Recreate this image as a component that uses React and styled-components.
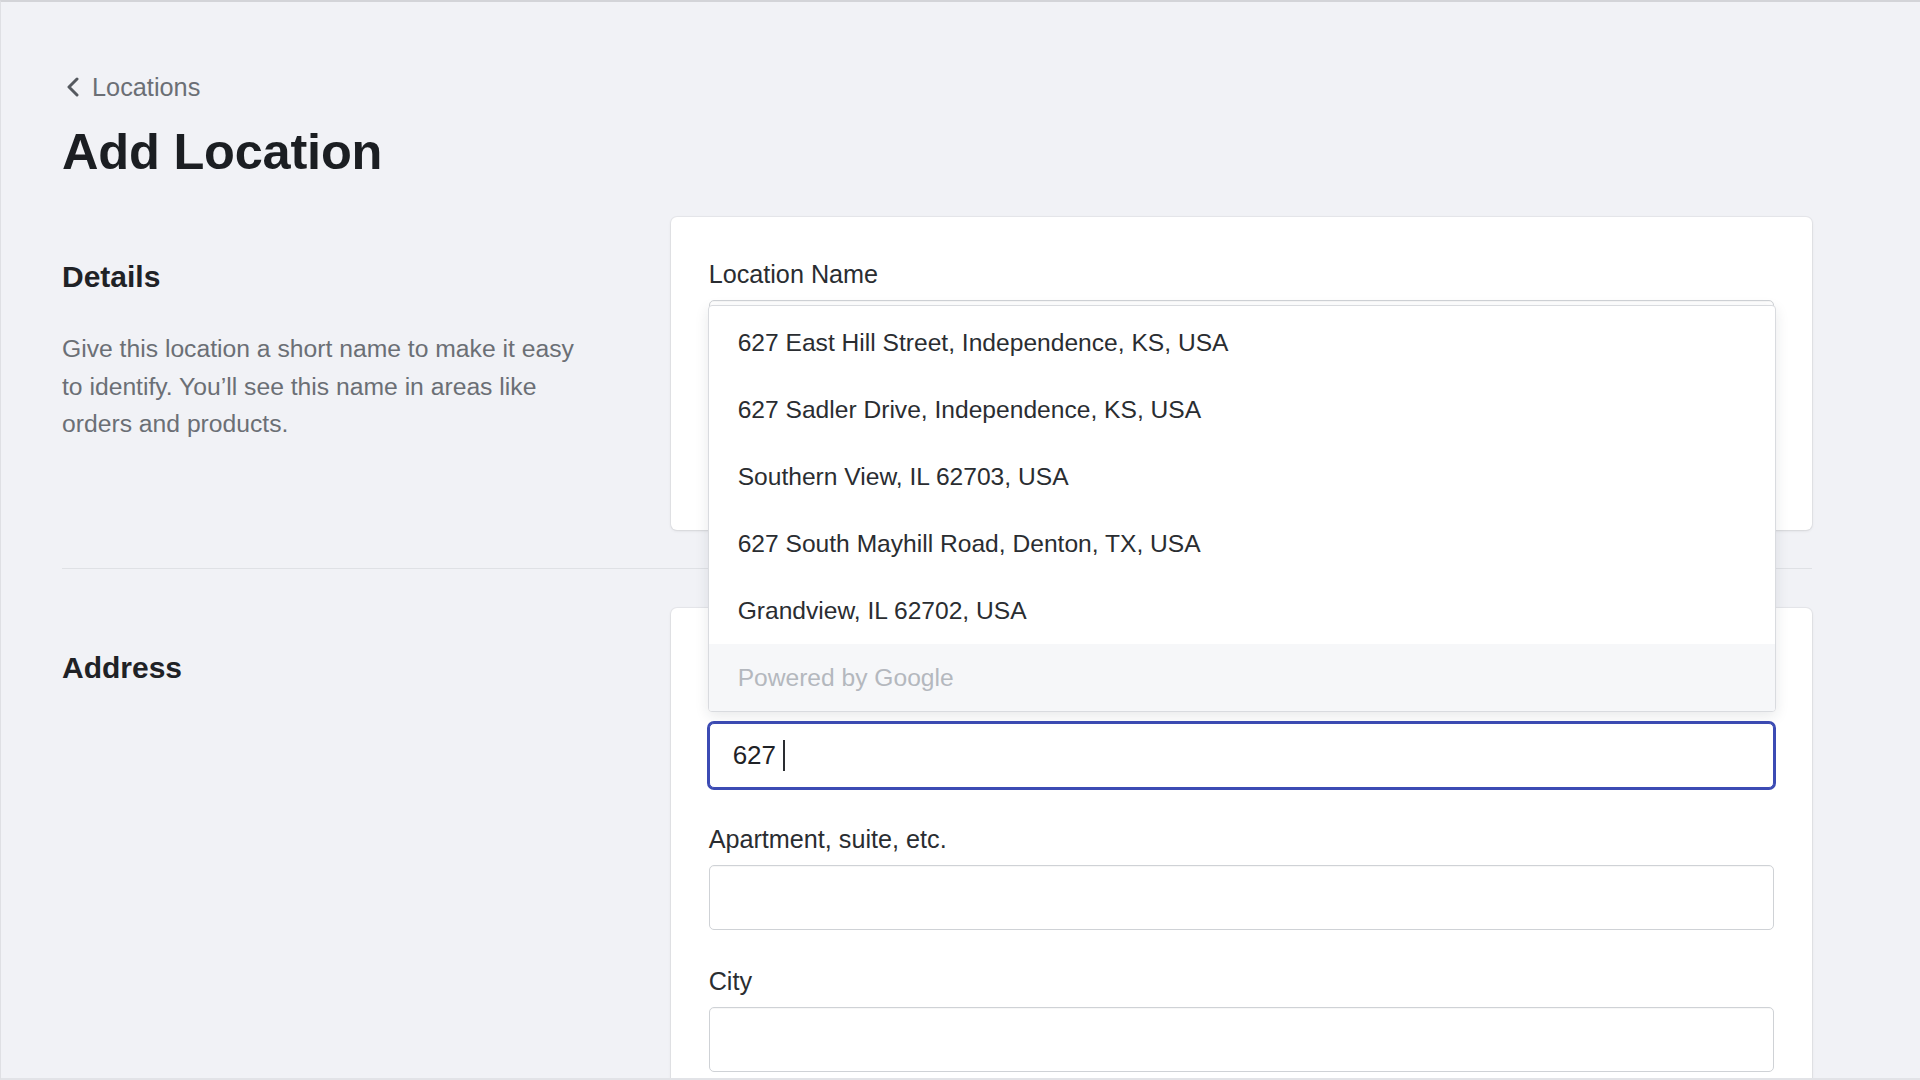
import React from "react";
import styled, { createGlobalStyle } from "styled-components";

const GlobalStyle = createGlobalStyle`
  html, body { margin: 0; padding: 0; }
  body {
    background: #f1f2f6;
    font-family: "Liberation Sans", Arial, Helvetica, sans-serif;
    color: #1f2226;
    -webkit-font-smoothing: antialiased;
  }
  * { box-sizing: border-box; }
`;

const Frame = styled.div`
  height: 1080px;
  overflow: hidden;
  border-top: 2px solid #d3d4d8;
  border-left: 1px solid #dfe0e4;
  border-bottom: 2px solid #e2e3e7;
  background: #f1f2f6;
`;

const Page = styled.main`
  padding: 70px 108px 0 61px;
`;

const Breadcrumb = styled.a`
  display: inline-flex;
  align-items: center;
  gap: 11px;
  margin-left: 3px;
  font-size: 25.3px;
  line-height: 30px;
  color: #6b6f75;
  text-decoration: none;
`;

const Title = styled.h1`
  margin: 20px 0 35px 0;
  font-size: 50.5px;
  line-height: 60px;
  font-weight: 700;
  color: #1b1e22;
  letter-spacing: -0.2px;
`;

const Section = styled.section`
  display: grid;
  grid-template-columns: 1fr 2fr;
  column-gap: 38px;
  align-items: start;
`;

const Aside = styled.div`
  padding-top: 42px;
`;

const SectionHeading = styled.h2`
  margin: 0;
  font-size: 30px;
  line-height: 35px;
  font-weight: 700;
  color: #1f2226;
`;

const Description = styled.p`
  margin: 36px 0 0;
  max-width: 530px;
  font-size: 24.7px;
  line-height: 37.5px;
  color: #6b6f75;
`;

const Card = styled.div`
  position: relative;
  background: #ffffff;
  border-radius: 6px;
  box-shadow: 0 0 0 1px rgba(63, 63, 68, 0.05), 0 1px 3px 0 rgba(63, 63, 68, 0.12);
  padding: ${(p) => p.$top}px 38px 38px;
  min-height: ${(p) => p.$minHeight || 0}px;
  z-index: ${(p) => p.$z || 0};
`;

const Divider = styled.hr`
  margin: 38px 0 39px;
  border: none;
  border-top: 1px solid #dfe1e5;
`;

const Field = styled.div`
  & + & {
    margin-top: 36px;
  }
`;

const Label = styled.label`
  display: block;
  font-size: 25.2px;
  line-height: 30px;
  color: #2a2d31;
  margin-bottom: 11px;
`;

const InputWrap = styled.div`
  position: relative;
`;

const TextInput = styled.div`
  height: 65px;
  display: flex;
  align-items: center;
  padding-left: 23px;
  background: #ffffff;
  border-radius: 5px;
  border: 1px solid ${(p) => (p.$focused ? "#3c4bb4" : "#cfd2d6")};
  box-shadow: ${(p) => (p.$focused ? "0 0 0 2px #3c4bb4" : "inset 0 1px 0 rgba(0,0,0,0.03)")};
  font-size: 26px;
  color: #1f2226;
`;

const Caret = styled.span`
  display: inline-block;
  width: 1.5px;
  height: 31px;
  margin-left: 7px;
  background: #2a2d31;
`;

const Dropdown = styled.ul`
  position: absolute;
  left: -1px;
  right: -2px;
  bottom: calc(100% + 11px);
  margin: 0;
  padding: 3px 0 0;
  list-style: none;
  background: #ffffff;
  border: 1px solid #d9dbdf;
  border-radius: 4px;
  box-shadow: 0 4px 14px rgba(30, 35, 45, 0.1);
  overflow: hidden;
  z-index: 10;
`;

const Suggestion = styled.li`
  height: 67px;
  display: flex;
  align-items: center;
  padding-left: 29px;
  font-size: 24.6px;
  color: ${(p) => (p.$muted ? "#b4b8be" : "#2a2d31")};
  background: ${(p) => (p.$muted ? "#f6f7f9" : "#ffffff")};
`;

const ChevronLeft = () => (
  <svg width="16" height="20" viewBox="0 0 16 20" fill="none">
    <path d="M12 2L4 10l8 8" stroke="#55595f" strokeWidth="3" strokeLinecap="round" strokeLinejoin="round" />
  </svg>
);

const suggestions = [
  "627 East Hill Street, Independence, KS, USA",
  "627 Sadler Drive, Independence, KS, USA",
  "Southern View, IL 62703, USA",
  "627 South Mayhill Road, Denton, TX, USA",
  "Grandview, IL 62702, USA",
];

export default function App() {
  return (
    <>
      <GlobalStyle />
      <Frame>
        <Page>
          <Breadcrumb href="#">
            <ChevronLeft />
            Locations
          </Breadcrumb>
          <Title>Add Location</Title>

          <Section>
            <Aside>
              <SectionHeading>Details</SectionHeading>
              <Description>
                Give this location a short name to make it easy to identify. You’ll see this name in areas like
                orders and products.
              </Description>
            </Aside>
            <Card $top={42} $minHeight={313}>
              <Field>
                <Label>Location Name</Label>
                <TextInput />
              </Field>
            </Card>
          </Section>

          <Divider />

          <Section>
            <Aside>
              <SectionHeading>Address</SectionHeading>
            </Aside>
            <Card $top={115} $z={5}>
              <Field>
                <InputWrap>
                  <Dropdown>
                    {suggestions.map((s) => (
                      <Suggestion key={s}>{s}</Suggestion>
                    ))}
                    <Suggestion $muted>Powered by Google</Suggestion>
                  </Dropdown>
                  <TextInput $focused>
                    627
                    <Caret />
                  </TextInput>
                </InputWrap>
              </Field>
              <Field>
                <Label>Apartment, suite, etc.</Label>
                <TextInput />
              </Field>
              <Field>
                <Label>City</Label>
                <TextInput />
              </Field>
            </Card>
          </Section>
        </Page>
      </Frame>
    </>
  );
}
